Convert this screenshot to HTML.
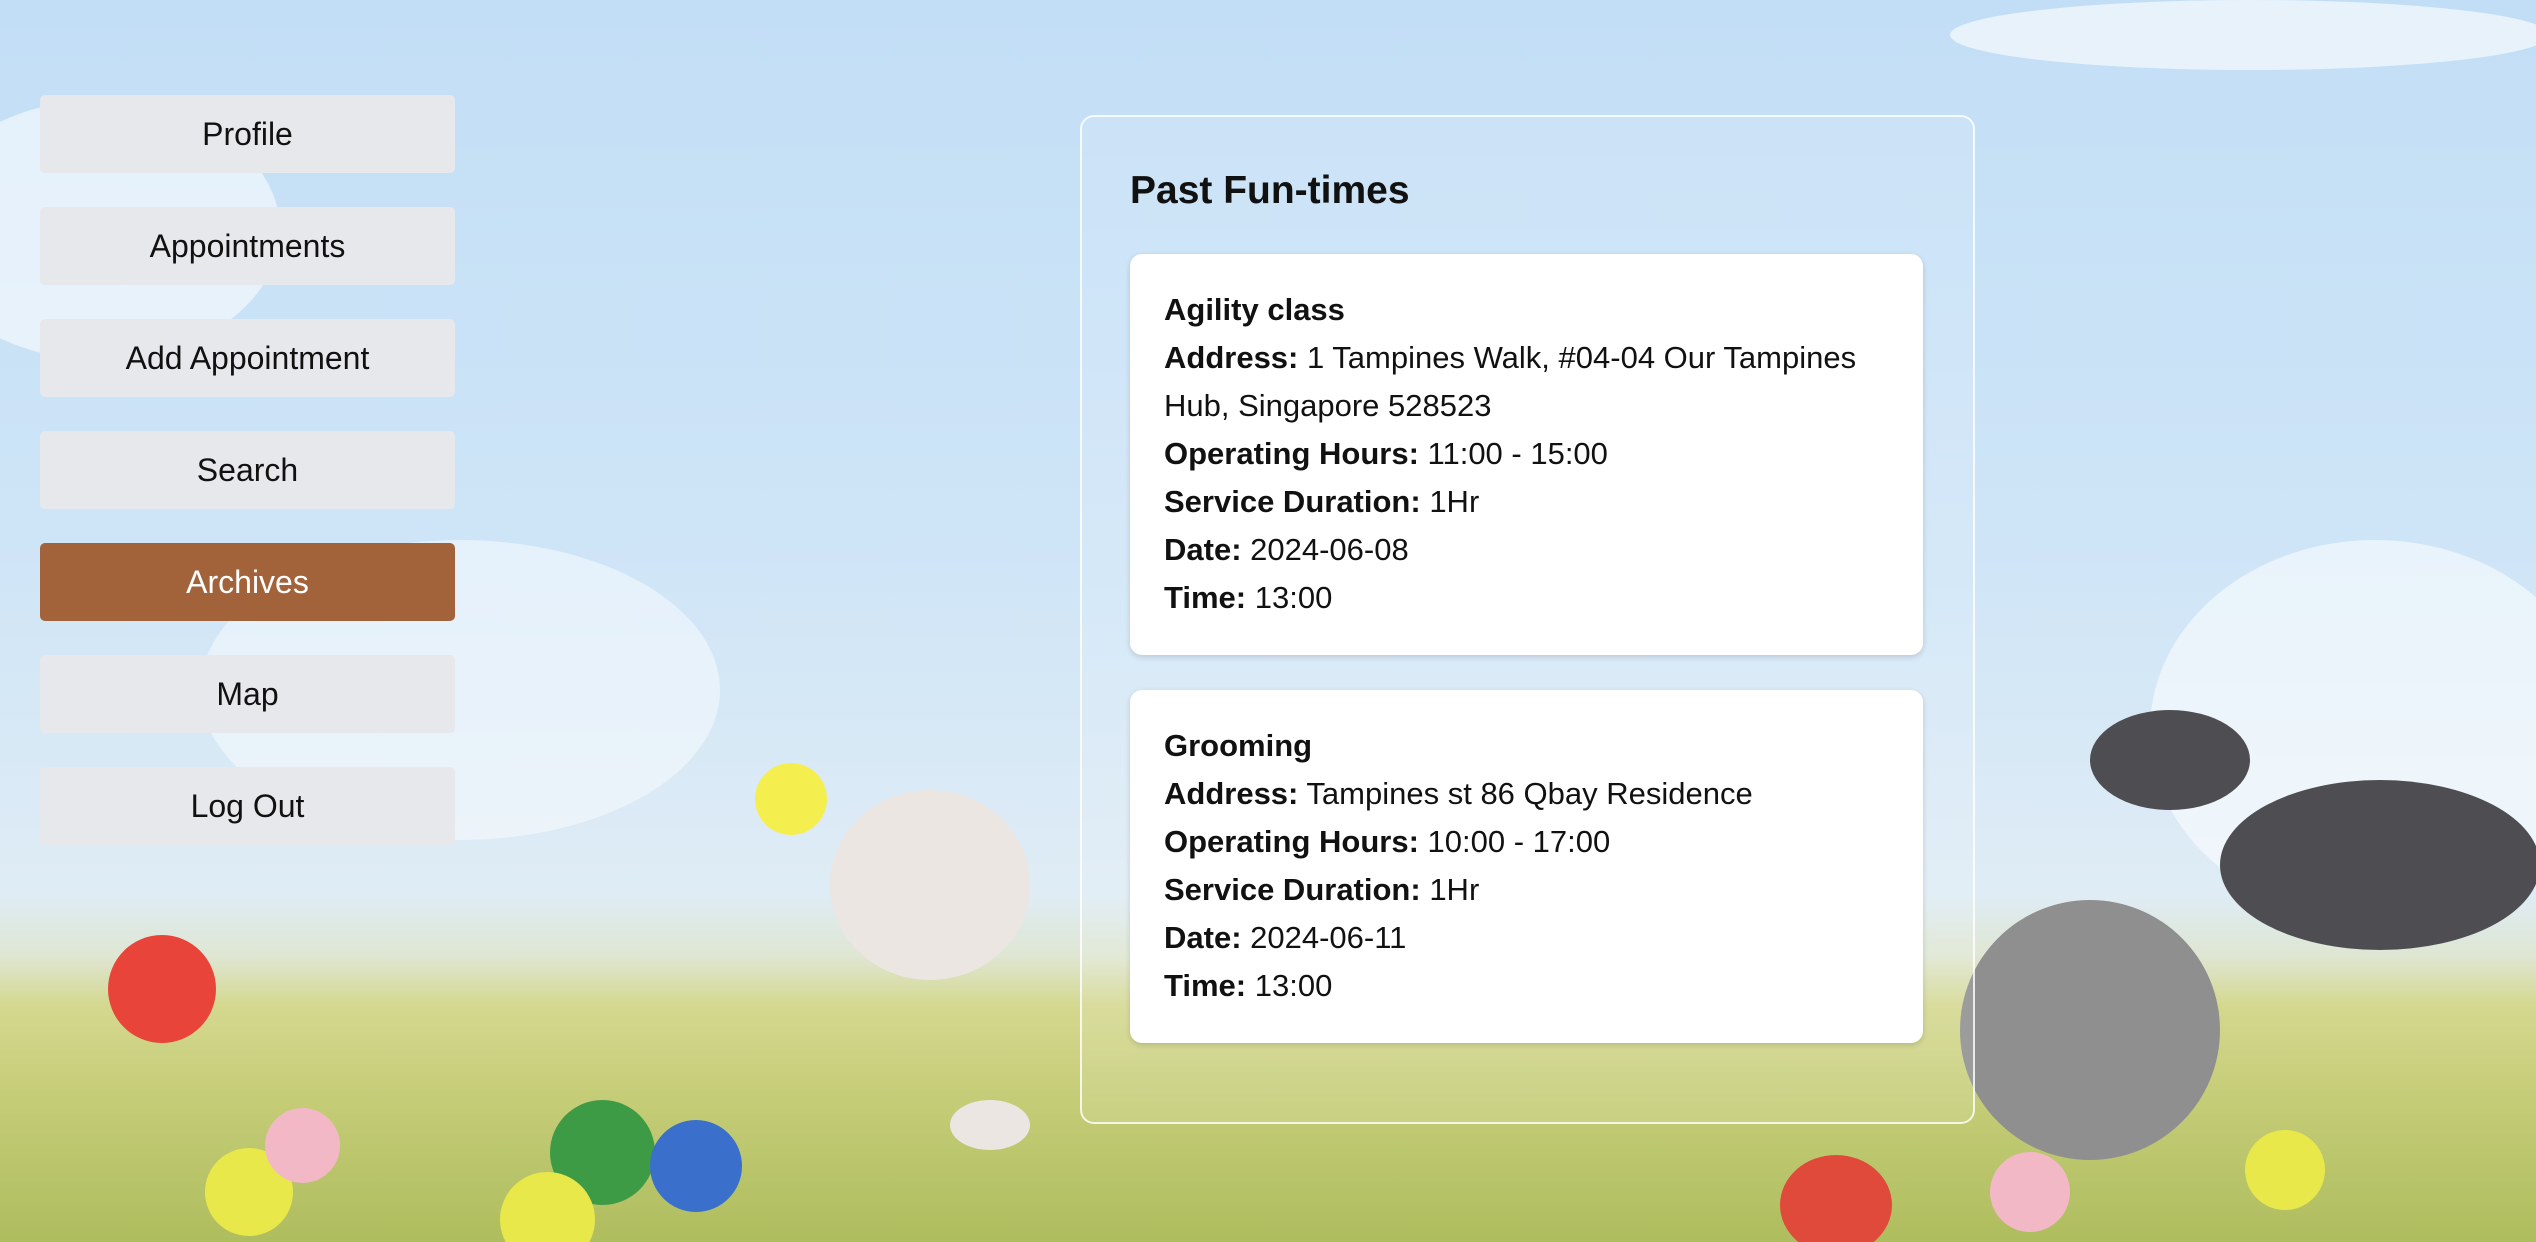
<!DOCTYPE html>
<html><head><meta charset="utf-8"><style>
*{margin:0;padding:0;box-sizing:border-box}
html,body{width:2536px;height:1242px;overflow:hidden}
body{position:relative;font-family:"Liberation Sans",sans-serif;background:#c3cc74}
.bg{position:absolute;left:0;top:0;width:2536px;height:1242px;
background:linear-gradient(180deg,#c2def6 0%,#cfe5f7 45%,#dfecf5 72%,#dfe6d2 77%,#d4d88f 81%,#c6cd78 88%,#aebd5e 100%);}
.cloud{position:absolute;background:#fff;border-radius:50%;opacity:.55}
.btn{position:absolute;left:40px;width:415px;height:78px;background:#e7e8eb;border-radius:5px;display:flex;align-items:center;justify-content:center;font-size:32px;color:#111}
.btn.active{background:#a3633a;color:#fff}
.panel{position:absolute;left:1080px;top:115px;width:895px;height:1009px;border:2px solid rgba(255,255,255,.8);border-radius:14px;background:rgba(255,255,255,.12)}
.panel h2{position:absolute;left:48px;top:52px;font-size:39px;font-weight:bold;color:#111}
.card{position:absolute;left:48px;width:793px;background:#fff;border-radius:12px;box-shadow:0 2px 6px rgba(0,0,0,.15);padding:32px 34px;font-size:31px;line-height:48px;color:#111}
.blob{position:absolute;border-radius:50%}
</style></head><body>
<div class="bg"></div>
<div class="cloud" style="left:-80px;top:100px;width:360px;height:260px"></div>
<div class="cloud" style="left:200px;top:540px;width:520px;height:300px;opacity:.45"></div>
<div class="cloud" style="left:1950px;top:0;width:600px;height:70px;opacity:.6"></div>
<div class="cloud" style="left:2150px;top:540px;width:450px;height:380px;opacity:.55"></div>
<div class="blob" style="left:830px;top:790px;width:200px;height:190px;background:#ebe6e2"></div>
<div class="blob" style="left:950px;top:1100px;width:80px;height:50px;background:#ebe6e2"></div>
<div class="blob" style="left:755px;top:763px;width:72px;height:72px;background:#f4ef4e"></div>
<div class="blob" style="left:1960px;top:900px;width:260px;height:260px;background:#8f8f90"></div>
<div class="blob" style="left:2220px;top:780px;width:320px;height:170px;background:#4e4e52"></div>
<div class="blob" style="left:2090px;top:710px;width:160px;height:100px;background:#4e4e52"></div>
<div class="blob" style="left:108px;top:935px;width:108px;height:108px;background:#e9443a"></div>
<div class="blob" style="left:550px;top:1100px;width:105px;height:105px;background:#3e9b45"></div>
<div class="blob" style="left:650px;top:1120px;width:92px;height:92px;background:#3a6fcc"></div>
<div class="blob" style="left:500px;top:1172px;width:95px;height:95px;background:#e9e84a"></div>
<div class="blob" style="left:205px;top:1148px;width:88px;height:88px;background:#e9e84a"></div>
<div class="blob" style="left:265px;top:1108px;width:75px;height:75px;background:#f2b8c6"></div>
<div class="blob" style="left:1780px;top:1155px;width:112px;height:100px;background:#e04a3a"></div>
<div class="blob" style="left:1990px;top:1152px;width:80px;height:80px;background:#f2b8c6"></div>
<div class="blob" style="left:2245px;top:1130px;width:80px;height:80px;background:#e9e84a"></div>

<div class="btn" style="top:95px">Profile</div>
<div class="btn" style="top:207px">Appointments</div>
<div class="btn" style="top:319px">Add Appointment</div>
<div class="btn" style="top:431px">Search</div>
<div class="btn active" style="top:543px">Archives</div>
<div class="btn" style="top:655px">Map</div>
<div class="btn" style="top:767px">Log Out</div>

<div class="panel">
<h2>Past Fun-times</h2>
<div class="card" style="top:137px;height:401px">
<b>Agility class</b><br><b>Address:</b> 1 Tampines Walk, #04-04 Our Tampines Hub, Singapore 528523<br><b>Operating Hours:</b> 11:00 - 15:00<br><b>Service Duration:</b> 1Hr<br><b>Date:</b> 2024-06-08<br><b>Time:</b> 13:00
</div>
<div class="card" style="top:573px;height:353px">
<b>Grooming</b><br><b>Address:</b> Tampines st 86 Qbay Residence<br><b>Operating Hours:</b> 10:00 - 17:00<br><b>Service Duration:</b> 1Hr<br><b>Date:</b> 2024-06-11<br><b>Time:</b> 13:00
</div>
</div>
</body></html>
